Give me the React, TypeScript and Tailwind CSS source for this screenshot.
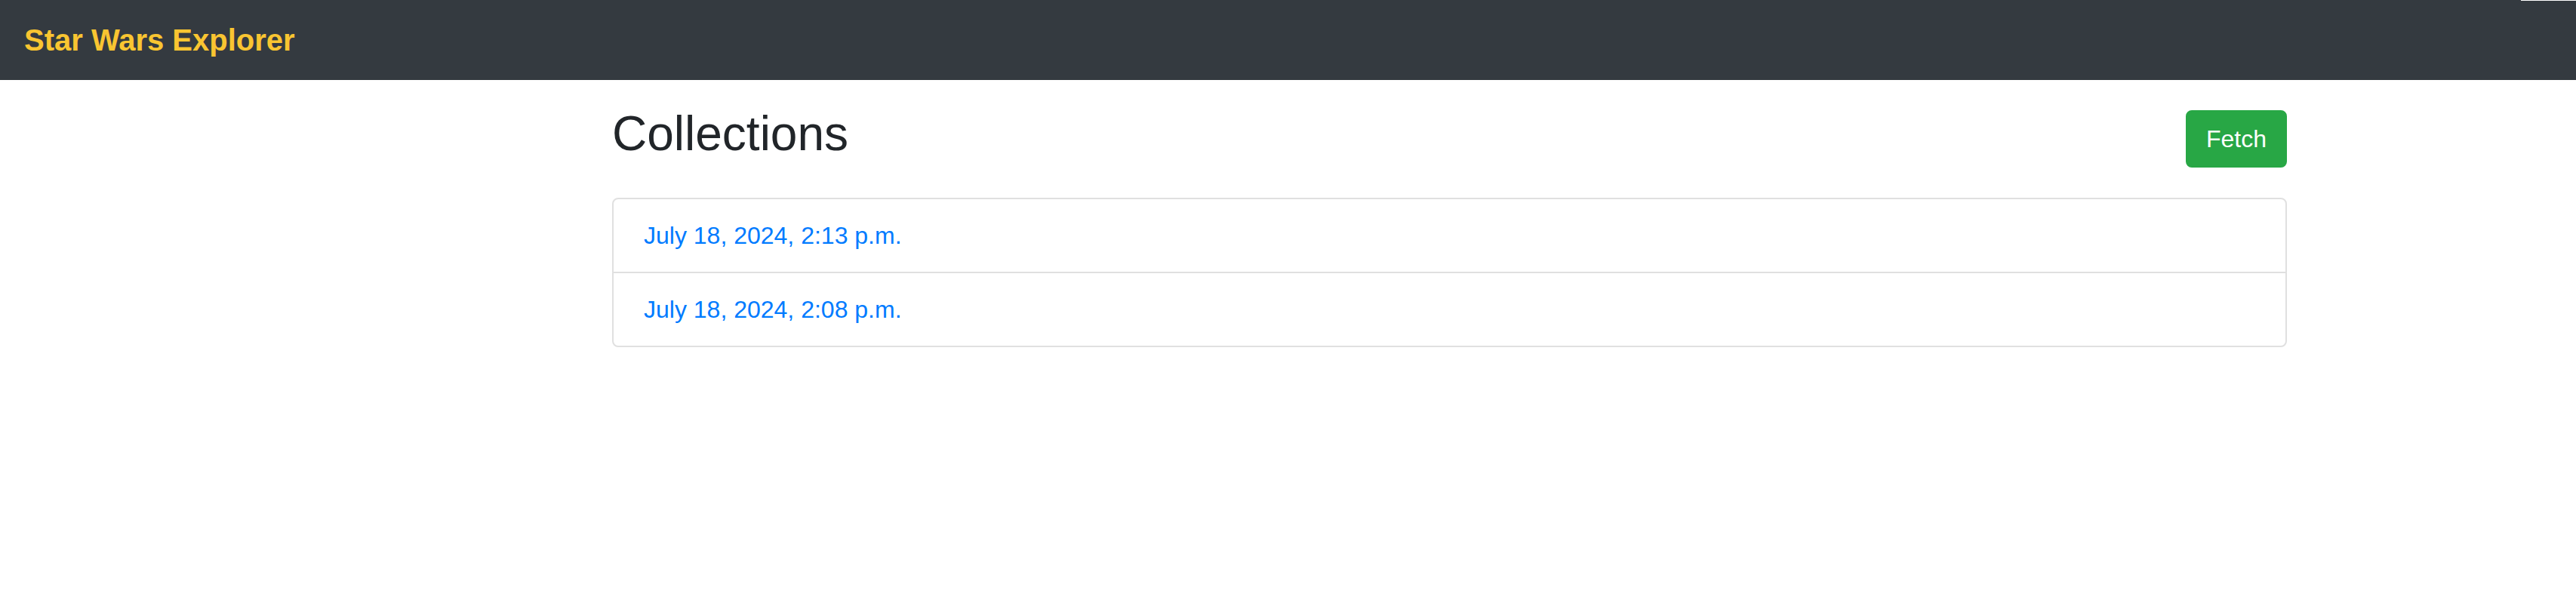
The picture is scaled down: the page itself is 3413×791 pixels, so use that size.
const COLLECTIONS = ['July 18, 2024, 2:13 p.m.', 'July 18, 2024, 2:08 p.m.'];

export default function App() {
  return (
    <div className="relative min-h-[791px] bg-white font-['Liberation_Sans',Arial,sans-serif]">
      {/* Navbar */}
      <nav className="flex h-[106px] items-center bg-[#343a40] px-[32px]">
        <a href="#" className="text-[40px] font-bold leading-none text-[#f9c531]">
          Star Wars Explorer
        </a>
      </nav>
      <div className="absolute right-0 top-0 h-px w-[73px] bg-white" />

      {/* Content */}
      <main className="ml-[811px] w-[2219px] pt-[33px]">
        <div className="mb-[40px] flex h-[83px] items-start justify-between">
          <h2 className="text-[64px] font-medium leading-[1.2] text-[#212529]">Collections</h2>
          <button className="mt-[7px] h-[76px] rounded-[8px] border-2 border-[#28a745] bg-[#28a745] px-[25px] text-[32px] leading-[48px] text-white">
            Fetch
          </button>
        </div>

        <div className="overflow-hidden rounded-[8px] border-2 border-[#e0e0e0]">
          {COLLECTIONS.map((c, i) => (
            <div
              key={c}
              className={`px-[40px] py-[24px] ${i > 0 ? 'border-t-2 border-[#e0e0e0]' : ''}`}
            >
              <a href="#" className="text-[32px] leading-[48px] text-[#007bff]">
                {c}
              </a>
            </div>
          ))}
        </div>
      </main>
    </div>
  );
}
